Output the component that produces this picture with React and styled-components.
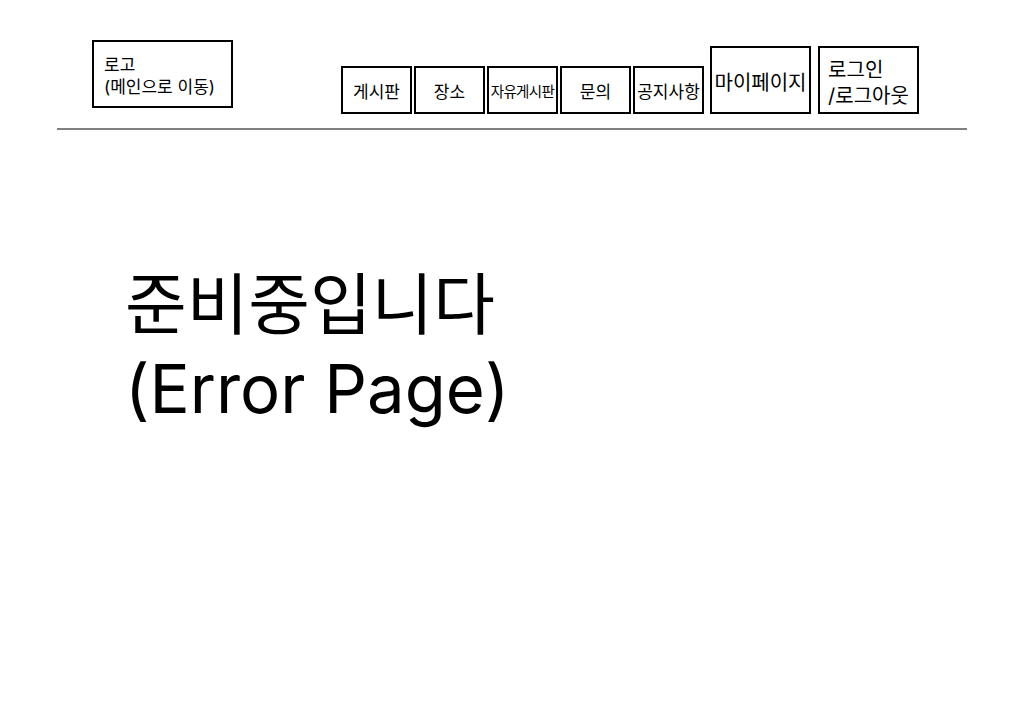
import React from "react";
import styled, { createGlobalStyle } from "styled-components";

const GlobalStyle = createGlobalStyle`
  body {
    margin: 0;
    background: #ffffff;
    color: #000000;
    font-family: Inter, "Noto Sans CJK KR", sans-serif;
  }
`;

const menus = [
  { label: "게시판" },
  { label: "장소" },
  { label: "자유게시판", small: true },
  { label: "문의" },
  { label: "공지사항" },
];

function App() {
  return (
    <>
      <GlobalStyle />
      <Header>
        <Logo>
          로고
          <br />
          (메인으로 이동)
        </Logo>
        <Nav>
          {menus.map((m) => (
            <MenuBox key={m.label} $small={m.small}>
              {m.label}
            </MenuBox>
          ))}
        </Nav>
        <UserNav>
          <BigBox>마이페이지</BigBox>
          <BigBox>
            <span>
              로그인
              <br />
              /로그아웃
            </span>
          </BigBox>
        </UserNav>
      </Header>
      <Main>
        <Title>
          준비중입니다
          <br />
          (Error Page)
        </Title>
      </Main>
    </>
  );
}

const Header = styled.header`
  display: flex;
  align-items: flex-end;
  margin: 40px 57px 0 57px;
  padding: 0 0 14px 35px;
  border-bottom: 2px solid #808080;
`;

const Logo = styled.div`
  box-sizing: border-box;
  width: 141px;
  height: 68px;
  margin-bottom: 6px;
  padding: 13px 10px;
  border: 2px solid #000;
  font-size: 17px;
  line-height: 21.5px;
  white-space: nowrap;
`;

const Nav = styled.nav`
  display: flex;
  gap: 2px;
  margin-left: 108px;
`;

const MenuBox = styled.div`
  box-sizing: border-box;
  display: flex;
  align-items: center;
  justify-content: center;
  width: 71px;
  height: 48px;
  border: 2px solid #000;
  font-size: ${(p) => (p.$small ? "14.5px" : "17px")};
  letter-spacing: ${(p) => (p.$small ? "-0.6px" : "0")};
  white-space: nowrap;
`;

const UserNav = styled.div`
  display: flex;
  gap: 7px;
  margin-left: 6px;
`;

const BigBox = styled.div`
  box-sizing: border-box;
  display: flex;
  align-items: center;
  justify-content: center;
  width: 101px;
  height: 68px;
  padding-top: 5px;
  border: 2px solid #000;
  font-size: 20px;
  line-height: 26px;
  white-space: nowrap;
`;

const Main = styled.main`
  padding: 133px 0 0 125px;
`;

const Title = styled.h1`
  margin: 0;
  font-size: 67px;
  font-weight: 400;
  line-height: 84px;
`;

export default App;
